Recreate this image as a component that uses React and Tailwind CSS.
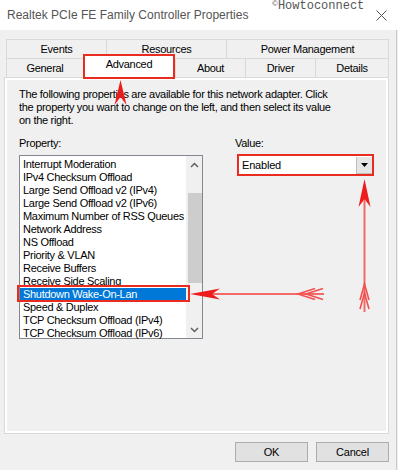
import React from "react";

const items = [
  "Interrupt Moderation",
  "IPv4 Checksum Offload",
  "Large Send Offload v2 (IPv4)",
  "Large Send Offload v2 (IPv6)",
  "Maximum Number of RSS Queues",
  "Network Address",
  "NS Offload",
  "Priority & VLAN",
  "Receive Buffers",
  "Receive Side Scaling",
  "Shutdown Wake-On-Lan",
  "Speed & Duplex",
  "TCP Checksum Offload (IPv4)",
  "TCP Checksum Offload (IPv6)",
];

function Tab({ className, children }) {
  return (
    <div
      className={
        "border-l border-t border-[#d9d9d9] bg-[#f0f0f0] flex items-center justify-center leading-[13px] tracking-[-0.3px] " +
        className
      }
    >
      {children}
    </div>
  );
}

export default function App() {
  return (
    <div className="relative w-[398px] h-[470px] bg-[#f0f0f0] flex overflow-hidden font-['Liberation_Sans',Arial,sans-serif] text-[11px] text-black">
      <div className="w-[396px] flex flex-col">
        {/* title bar */}
        <div className="h-[30px] shrink-0 bg-white flex items-center justify-between pl-[7px] pr-[9px]">
          <span className="text-[12px] text-[#555] leading-[14px]">
            Realtek PCIe FE Family Controller Properties
          </span>
          <svg width="11" height="11" viewBox="0 0 11 11">
            <path d="M0.5 0.5 L10.5 10.5 M10.5 0.5 L0.5 10.5" stroke="#555" strokeWidth="1" fill="none" />
          </svg>
        </div>

        {/* tabs */}
        <div className="mt-[9px] ml-[6px] w-[383px] flex flex-col">
          <div className="flex h-[19px]">
            <Tab className="w-[100px]">Events</Tab>
            <Tab className="w-[120px]">Resources</Tab>
            <Tab className="w-[163px] border-r">Power Management</Tab>
          </div>
          <div className="flex h-[19px]">
            <Tab className="w-[77px]">General</Tab>
            <div className="relative z-10 self-start -mt-[4px] h-[25px] w-[92px] bg-white border-2 border-[#ea2b1f] flex justify-center pt-[2px] leading-[13px] tracking-[-0.3px]">
              Advanced
            </div>
            <Tab className="w-[70px]">About</Tab>
            <Tab className="w-[70px]">Driver</Tab>
            <Tab className="w-[74px] border-r">Details</Tab>
          </div>
        </div>

        {/* panel */}
        <div className="ml-[4px] w-[385px] h-[357px] shrink-0 border border-[#d9d9d9]">
          <div className="h-full border-2 border-white pl-[12px] pt-[8px] flex flex-col">
            <p className="leading-[13px] tracking-[-0.3px]">
              The following properties are available for this network adapter. Click
              <br />
              the property you want to change on the left, and then select its value
              <br />
              on the right.
            </p>
            <div className="flex mt-[10px]">
              <div className="w-[184px] flex flex-col">
                <div className="leading-[13px] tracking-[-0.3px]">Property:</div>
                <div className="mt-[5px] relative w-[184px] h-[184px] border border-[#828790] bg-white flex">
                  <div className="w-[166px] pt-[2px] flex flex-col">
                    {items.map((it, i) => (
                      <div
                        key={it}
                        className={
                          "h-[13px] leading-[13px] pl-[3px] whitespace-nowrap tracking-[-0.3px] " +
                          (i === 10 ? "bg-[#0078d7] text-white" : "")
                        }
                      >
                        {it}
                      </div>
                    ))}
                  </div>
                  <div className="w-[16px] bg-[#f0f0f0] flex flex-col">
                    <div className="h-[17px] flex items-center justify-center">
                      <svg width="9" height="6" viewBox="0 0 9 6">
                        <path d="M1 5 L4.5 1.5 L8 5" stroke="#606060" strokeWidth="1.5" fill="none" />
                      </svg>
                    </div>
                    <div className="h-[20px]" />
                    <div className="ml-[2px] w-[14px] h-[90px] bg-[#cdcdcd]" />
                    <div className="flex-1" />
                    <div className="h-[17px] flex items-center justify-center">
                      <svg width="9" height="6" viewBox="0 0 9 6">
                        <path d="M1 1 L4.5 4.5 L8 1" stroke="#606060" strokeWidth="1.5" fill="none" />
                      </svg>
                    </div>
                  </div>
                  <div className="absolute left-[-3px] top-[129px] w-[173px] h-[17px] border-2 border-[#ea2b1f]" />
                </div>
              </div>
              <div className="ml-[32px] flex flex-col">
                <div className="leading-[13px] tracking-[-0.3px]">Value:</div>
                <div className="mt-[4px] ml-[2px] w-[137px] h-[22px] border-2 border-[#ea2b1f] bg-white flex">
                  <div className="flex-1 pl-[3px] flex items-center leading-[13px] tracking-[-0.2px]">Enabled</div>
                  <div className="w-[16px] mt-[1px] bg-[#e5e5e5] border-l border-b border-[#bdbdbd] flex items-center justify-center">
                    <svg width="7" height="4" viewBox="0 0 7 4">
                      <path d="M0 0 L7 0 L3.5 4 Z" fill="#000" />
                    </svg>
                  </div>
                </div>
              </div>
            </div>
          </div>
        </div>

        {/* buttons */}
        <div className="mt-[8px] flex justify-end gap-[8px] pr-[7px]">
          <div className="w-[73px] h-[20px] bg-[#e1e1e1] border border-[#adadad] flex items-center justify-center tracking-[-0.2px]">
            OK
          </div>
          <div className="w-[73px] h-[20px] bg-[#e1e1e1] border border-[#adadad] flex items-center justify-center tracking-[-0.2px]">
            Cancel
          </div>
        </div>
      </div>

      {/* right edge */}
      <div className="w-[2px] flex flex-col">
        <div className="h-[30px] bg-white" />
        <div className="flex-1 border-l border-[#c9c9c9]" />
      </div>

      {/* watermark */}
      <div className="absolute left-[272px] top-0 flex items-start text-[#555]">
        <span className="text-[8px] leading-[8px] font-['Liberation_Sans',sans-serif]">©</span>
        <span className="text-[12px] leading-[12px] font-['Liberation_Mono',monospace]">Howtoconnect</span>
      </div>

      {/* annotation arrows */}
      <svg className="absolute left-0 top-0 pointer-events-none" width="398" height="470" viewBox="0 0 398 470">
        <path d="M120.5 80 L126.5 105 L120.5 97 L114.5 105 Z" fill="#ea1c1c" />
        {/* vertical */}
        <line x1="364.5" y1="195" x2="364.5" y2="312" stroke="#f26a6a" strokeWidth="2" />
        <path d="M364.5 179 L370.5 207 L364.5 199 L358.5 207 Z" fill="#ee1c1c" />
        <path d="M360 300 L364.5 284 L369 300 M360 309 L364.5 293 L369 309" stroke="#f25050" strokeWidth="1.6" fill="none" />
        {/* horizontal */}
        <line x1="205" y1="294" x2="324" y2="294" stroke="#f26a6a" strokeWidth="2" />
        <path d="M190 294 L220 288.5 L212 294 L220 299.5 Z" fill="#ee1c1c" />
        <path d="M315 288.5 L298 294 L315 299.5 M323 288.5 L306 294 L323 299.5" stroke="#f25050" strokeWidth="1.6" fill="none" />
      </svg>
    </div>
  );
}
